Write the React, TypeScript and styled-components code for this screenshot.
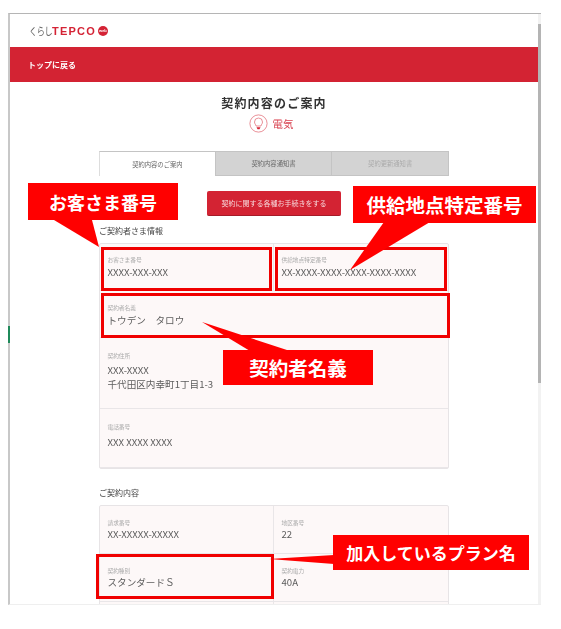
import React from 'react';
import styled, { createGlobalStyle } from 'styled-components';

const GlobalStyle = createGlobalStyle`
  html, body {
    margin: 0;
    padding: 0;
    background: #fff;
  }
  body {
    font-family: "Noto Sans CJK JP", "Liberation Sans", sans-serif;
  }
`;

const Stage = styled.div`
  position: relative;
  width: 561px;
  height: 629px;
  overflow: hidden;
  background: #fff;
  padding: 13px 0 0 8px;
  box-sizing: border-box;
`;

const BrowserShot = styled.div`
  width: 533px;
  height: 592px;
  box-sizing: border-box;
  border-top: 1px solid #b5b5b5;
  border-left: 2px solid #c8c8c8;
  border-bottom: 1px solid #efefef;
  overflow: hidden;
  display: flex;
`;

const Page = styled.div`
  flex: 1;
  min-width: 0;
  filter: blur(0.3px);
`;

const ScrollTrack = styled.div`
  width: 3px;
  background: #f2f2f2;
  display: flex;
  flex-direction: column;
  padding-top: 10px;
`;

const ScrollThumb = styled.div`
  height: 359px;
  background: #b4b4b4;
`;

const Header = styled.header`
  height: 33px;
  display: flex;
  align-items: center;
  padding-left: 19px;
`;

const LogoKana = styled.span`
  display: inline-block;
  width: 23px;
  font-size: 10.5px;
  color: #666;
  letter-spacing: -0.5px;
  white-space: nowrap;
  transform: scaleX(0.78);
  transform-origin: left center;
`;

const LogoLatin = styled.span`
  font-family: "Liberation Sans", sans-serif;
  font-size: 11px;
  font-weight: 700;
  color: #d42335;
  letter-spacing: 1.2px;
  margin-right: 2px;
`;

const WebBadge = styled.span`
  width: 10px;
  height: 10px;
  border-radius: 50%;
  background: #d42335;
  color: #fff;
  font-family: "Liberation Sans", sans-serif;
  font-size: 4px;
  font-weight: 700;
  display: flex;
  align-items: center;
  justify-content: center;
`;

const RedBar = styled.div`
  height: 35px;
  background: #d32333;
  color: #fff;
  display: flex;
  align-items: center;
  padding-left: 18px;
  font-size: 8px;
  font-weight: 700;
`;

const Main = styled.main`
  width: 350px;
  margin: 0 auto;
  display: flex;
  flex-direction: column;
`;

const Title = styled.h1`
  margin: 13px 0 0;
  font-size: 12px;
  line-height: 16px;
  font-weight: 700;
  letter-spacing: 1.2px;
  color: #333;
  text-align: center;
`;

const ServiceRow = styled.div`
  margin-top: 3px;
  padding-right: 6px;
  display: flex;
  justify-content: center;
  align-items: center;
  gap: 5px;
  height: 19px;
  color: #d8404e;
  font-size: 10.5px;
`;

const Tabs = styled.div`
  margin-top: 18px;
  display: grid;
  grid-template-columns: repeat(3, 1fr);
  height: 25px;
`;

const Tab = styled.div<{ $state: 'active' | 'normal' | 'disabled' }>`
  display: flex;
  align-items: center;
  justify-content: center;
  font-size: 6.3px;
  box-sizing: border-box;
  color: ${(p) => (p.$state === 'disabled' ? '#aaa' : '#666')};
  background: ${(p) => (p.$state === 'active' ? '#fff' : '#d3d3d3')};
  border: 1px solid #c4c4c4;
  border-bottom: ${(p) => (p.$state === 'active' ? 'none' : '1px solid #c4c4c4')};
  border-left: ${(p) => (p.$state === 'active' ? '1px solid #ddd' : 'none')};
`;

const ActionButton = styled.button`
  margin: 15px auto 0;
  width: 134px;
  height: 25px;
  border: none;
  border-bottom: 1px solid #a51b28;
  border-radius: 2px;
  background: #d32333;
  color: #f6d5d8;
  font-family: inherit;
  font-size: 7px;
  padding: 0;
`;

const SectionTitle = styled.h2<{ $top: number }>`
  margin: ${(p) => p.$top}px 0 6px;
  font-size: 8px;
  line-height: 12px;
  font-weight: 400;
  color: #444;
`;

const InfoCard = styled.div`
  display: grid;
  grid-template-columns: 1fr 1fr;
  background: #fdf8f8;
  border: 1px solid #e7e4e6;
  border-radius: 2px;
`;

const Cell = styled.div<{ $wide?: boolean; $height: number; $pad: number }>`
  grid-column: ${(p) => (p.$wide ? '1 / -1' : 'auto')};
  height: ${(p) => p.$height}px;
  box-sizing: border-box;
  padding: ${(p) => p.$pad}px 7.5px 0;
  border-bottom: 1px solid #e9e6e8;
  &:nth-child(odd) {
    border-right: ${(p) => (p.$wide ? 'none' : '1px solid #e9e6e8')};
  }
`;

const CellLabel = styled.div`
  font-size: 5.7px;
  line-height: 8px;
  color: #aaa;
`;

const CellValue = styled.div<{ $gap: number }>`
  margin-top: ${(p) => p.$gap}px;
  font-size: 9.6px;
  line-height: 14px;
  color: #5c5c5c;
`;

const OutlineBox = styled.div<{ $x: number; $y: number; $w: number; $h: number }>`
  position: absolute;
  left: ${(p) => p.$x}px;
  top: ${(p) => p.$y}px;
  width: ${(p) => p.$w}px;
  height: ${(p) => p.$h}px;
  box-sizing: border-box;
  border: 3px solid #f00000;
`;

const Callout = styled.div<{ $x: number; $y: number; $w: number; $h: number; $size: number }>`
  position: absolute;
  left: ${(p) => p.$x}px;
  top: ${(p) => p.$y}px;
  width: ${(p) => p.$w}px;
  height: ${(p) => p.$h}px;
  background: #ff0000;
  color: #fff;
  font-size: ${(p) => p.$size}px;
  font-weight: 700;
  display: flex;
  align-items: center;
  justify-content: center;
  white-space: nowrap;
`;

const TailLayer = styled.svg`
  position: absolute;
  left: 0;
  top: 0;
`;

const GreenMark = styled.div`
  position: absolute;
  left: 8px;
  top: 326px;
  width: 2px;
  height: 17px;
  background: #1f8a5a;
`;

const BulbIcon = () => (
  <svg width="19" height="19" viewBox="0 0 19 19" fill="none" stroke="#e0606c" strokeWidth="0.7">
    <circle cx="9.5" cy="9.5" r="8.6" />
    <path d="M7 12c0-1.500-1.500-2-1.500-4a4 4 0 0 1 8 0c0 2-1.500 2.500-1.500 4z" />
    <path d="M7.500 13.200h4l-1 2h-2z" fill="#d42335" stroke="none" />
  </svg>
);

const App: React.FC = () => (
  <Stage>
    <GlobalStyle />
    <BrowserShot>
      <Page>
        <Header>
          <LogoKana>くらし</LogoKana>
          <LogoLatin>TEPCO</LogoLatin>
          <WebBadge>web</WebBadge>
        </Header>
        <RedBar>トップに戻る</RedBar>
        <Main>
          <Title>契約内容のご案内</Title>
          <ServiceRow>
            <BulbIcon />
            電気
          </ServiceRow>
          <Tabs>
            <Tab $state="active">契約内容のご案内</Tab>
            <Tab $state="normal">契約内容通知書</Tab>
            <Tab $state="disabled">契約更新通知書</Tab>
          </Tabs>
          <ActionButton>契約に関する各種お手続きをする</ActionButton>
          <SectionTitle $top={9}>ご契約者さま情報</SectionTitle>
          <InfoCard>
            <Cell $height={47} $pad={12}>
              <CellLabel>お客さま番号</CellLabel>
              <CellValue $gap={1}>XXXX-XXX-XXX</CellValue>
            </Cell>
            <Cell $height={47} $pad={12}>
              <CellLabel>供給地点特定番号</CellLabel>
              <CellValue $gap={1}>XX-XXXX-XXXX-XXXX-XXXX-XXXX</CellValue>
            </Cell>
            <Cell $wide $height={47} $pad={13}>
              <CellLabel>契約者名義</CellLabel>
              <CellValue $gap={1}>トウデン　タロウ</CellValue>
            </Cell>
            <Cell $wide $height={71} $pad={14}>
              <CellLabel>契約住所</CellLabel>
              <CellValue $gap={3}>
                XXX-XXXX
                <br />
                千代田区内幸町1丁目1-3
              </CellValue>
            </Cell>
            <Cell $wide $height={59} $pad={14}>
              <CellLabel>電話番号</CellLabel>
              <CellValue $gap={4}>XXX XXXX XXXX</CellValue>
            </Cell>
          </InfoCard>
          <SectionTitle $top={18}>ご契約内容</SectionTitle>
          <InfoCard>
            <Cell $height={48} $pad={13}>
              <CellLabel>請求番号</CellLabel>
              <CellValue $gap={0}>XX-XXXXX-XXXXX</CellValue>
            </Cell>
            <Cell $height={48} $pad={13}>
              <CellLabel>地区番号</CellLabel>
              <CellValue $gap={0}>22</CellValue>
            </Cell>
            <Cell $height={48} $pad={13}>
              <CellLabel>契約種別</CellLabel>
              <CellValue $gap={0}>スタンダードＳ</CellValue>
            </Cell>
            <Cell $height={48} $pad={13}>
              <CellLabel>契約電力</CellLabel>
              <CellValue $gap={0}>40A</CellValue>
            </Cell>
            <Cell $height={48} $pad={13} />
            <Cell $height={48} $pad={13} />
          </InfoCard>
        </Main>
      </Page>
      <ScrollTrack>
        <ScrollThumb />
      </ScrollTrack>
    </BrowserShot>

    <GreenMark />

    <OutlineBox $x={101} $y={247} $w={171} $h={44} />
    <OutlineBox $x={275} $y={247} $w={172} $h={44} />
    <OutlineBox $x={101} $y={293} $w={349} $h={45} />
    <OutlineBox $x={96} $y={554} $w={178} $h={45} />

    <TailLayer width="561" height="629" viewBox="0 0 561 629">
      <polygon points="54,220 92,220 99,247" fill="#ff0000" />
      <polygon points="384,222 430,222 350,270" fill="#ff0000" />
      <polygon points="202,322 290,351 250,351" fill="#ff0000" />
      <polygon points="269,559 334,555 334,564" fill="#ff0000" />
    </TailLayer>

    <Callout $x={28} $y={183} $w={150} $h={37} $size={18}>お客さま番号</Callout>
    <Callout $x={353} $y={186} $w={183} $h={37} $size={19.5}>供給地点特定番号</Callout>
    <Callout $x={223} $y={350} $w={150} $h={35} $size={19.5}>契約者名義</Callout>
    <Callout $x={333} $y={535} $w={196} $h={35} $size={17}>加入しているプラン名</Callout>
  </Stage>
);

export default App;
